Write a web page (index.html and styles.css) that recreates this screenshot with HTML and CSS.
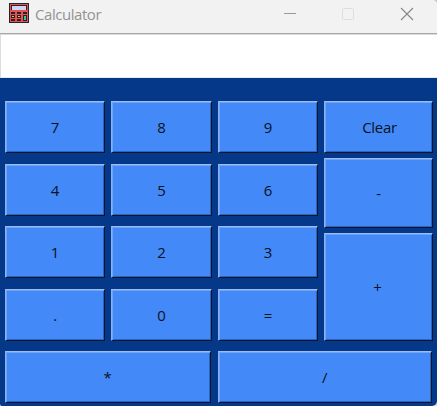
FILE: index.html
```html
<!DOCTYPE html>
<html lang="en">
<head>
<meta charset="utf-8">
<title>Calculator</title>
<link rel="stylesheet" href="styles.css">
</head>
<body>
<div class="window">
  <header class="titlebar">
    <svg class="app-icon" width="20" height="20" viewBox="0 0 20 20" shape-rendering="crispEdges">
      <path fill="#25222a" d="M0 0h20v20H0z"/>
      <path fill="#e65252" d="M1 1h18v18H1z"/>
      <path fill="#25222a" d="M2 2h16v5H2zM2 9h4v2H2zM8 9h4v2H8zM14 9h4v2h-4zM2 12h4v3H2zM8 12h4v3H8zM14 12h4v6h-4zM2 16h4v2H2zM8 16h4v2H8z"/>
      <path fill="#ccd6f2" d="M3 3h14v4H3z"/>
      <path fill="#f7b53c" d="M3 13h2v1H3zM9 13h2v1H9z"/>
      <path fill="#2fc4a0" d="M15 13h2v4h-2z"/>
    </svg>
    <span class="title">Calculator</span>
    <svg class="controls" width="132" height="14" viewBox="0 0 132 14" fill="none">
      <path stroke="#999" d="M1 6.5h12"/>
      <rect x="59.5" y="1.5" width="11" height="11" rx="1" stroke="#dedede"/>
      <path stroke="#858585" stroke-width="1.1" d="M118 1l12 12M130 1l-12 12"/>
    </svg>
  </header>
  <div class="display"></div>
  <main class="keypad">
    <div class="upper">
      <div class="numbers">
        <button>7</button><button>8</button><button>9</button>
        <button>4</button><button>5</button><button>6</button>
        <button>1</button><button>2</button><button>3</button>
        <button>.</button><button>0</button><button>=</button>
      </div>
      <div class="side">
        <button class="clear">Clear</button>
        <button class="minus">-</button>
        <button class="plus">+</button>
      </div>
    </div>
    <div class="bottom">
      <button>*</button>
      <button>/</button>
    </div>
  </main>
</div>
</body>
</html>
```
FILE: styles.css
```css
* { box-sizing: border-box; }
body { margin: 0; overflow: hidden; background: #ddd; }
.window {
  width: 437px;
  height: 406px;
  background: #06388a;
  border-radius: 0 3px 5px 2px;
  overflow: hidden;
}
.titlebar {
  display: flex;
  align-items: flex-start;
  height: 34px;
  padding: 3px 22px 0 9px;
  background: #f2f2f2;
  border-bottom: 1px solid #a9a9a9;
}
.title {
  margin-left: 6px;
  font: 15px/22px "Open Sans", sans-serif;
  letter-spacing: -0.45px;
  color: #929292;
}
.controls { margin: 4px 0 0 auto; }
.display {
  height: 44px;
  background: #fff;
  border-top: 1px solid #dadada;
  border-left: 1px solid #dcdcdc;
  border-bottom: 1px solid #e5e8ee;
}
.keypad { padding: 23px 4px 0 5px; }
.upper { display: flex; gap: 6px; height: 240px; }
.numbers {
  display: grid;
  grid-template-columns: 100px 101px 100px;
  grid-template-rows: repeat(4, 52px);
  column-gap: 6px;
  row-gap: 10.6px;
}
.side { display: flex; flex-direction: column; gap: 5px; width: 109px; }
.clear { height: 52px; }
.minus { height: 70px; }
.plus { height: 108px; }
.bottom {
  display: grid;
  grid-template-columns: 206px 214px;
  grid-template-rows: 52px;
  column-gap: 7px;
  margin-top: 10px;
}
button {
  margin: 0;
  padding: 0;
  border: 1px solid;
  border-color: #9bbcf0 #08152b #08152b #8ab2f3;
  border-radius: 0;
  background: #4489f8;
  box-shadow: inset 1px 1px #6fa3f6, inset -1px -1px #2864bd;
  color: #0b1220;
  font: 15px/20px "Open Sans", sans-serif;
  letter-spacing: -0.3px;
}
.clear { padding-left: 2px; }
.plus { padding-right: 2px; }
.bottom button { padding-right: 1px; }
```
